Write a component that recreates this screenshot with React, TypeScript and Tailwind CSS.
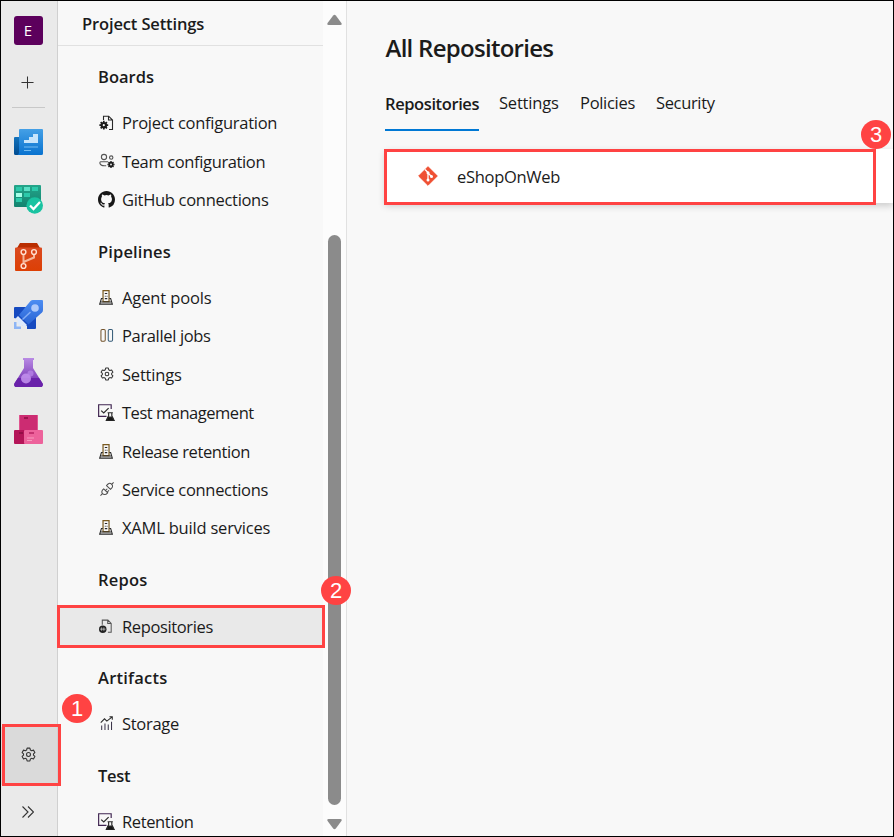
import type { ReactNode } from "react";

type IconName = "projectConfig" | "teamConfig" | "github" | "server" | "parallel" | "gear" | "test" | "plug" | "repo" | "chart";

function GearIcon({ className }: { className: string }) {
  return (
    <svg viewBox="0 0 16 16" className={className} fill="none" stroke="currentColor" strokeWidth="1.15" strokeLinejoin="round">
      <path d="M6.5 1.2h3l.5 2 1.3.75 2-.6 1.5 2.6L13.3 7.4v1.3l1.5 1.4-1.5 2.6-2-.6-1.3.75-.5 2h-3l-.5-2-1.3-.75-2 .6-1.5-2.6 1.5-1.4V7.4L1.2 5.95l1.5-2.6 2 .6L6 3.2z" />
      <circle cx="8" cy="8" r="2.1" />
    </svg>
  );
}

function SolidGear({ x, y, r }: { x: number; y: number; r: number }) {
  return (
    <g stroke="#1b1b1b">
      <circle cx={x} cy={y} r={r * 0.55} fill="none" strokeWidth={r * 0.55} />
      <path
        strokeWidth={r * 0.42}
        d={[0, 45, 90, 135, 180, 225, 270, 315]
          .map((a) => {
            const c = Math.cos((a * Math.PI) / 180);
            const s = Math.sin((a * Math.PI) / 180);
            return `M${x + c * r * 0.7} ${y + s * r * 0.7}L${x + c * r * 1.1} ${y + s * r * 1.1}`;
          })
          .join("")}
      />
    </g>
  );
}

const iconArt: Record<IconName, ReactNode> = {
  projectConfig: (
    <>
      <path d="M4.500 5V1.200h5.200L13.500 5v9.500H10M9.500 1.200V5h4" />
      <SolidGear x={4.8} y={10.2} r={4} />
    </>
  ),
  teamConfig: (
    <g stroke="#555">
      <circle cx="5" cy="4" r="2.600" />
      <circle cx="12.200" cy="4.600" r="1.700" />
      <path d="M9 8.800H1.800C.2 8.800.3 12.800 5.200 12.800h2" />
      <SolidGear x={12} y={11.5} r={3.2} />
    </g>
  ),
  github: (
    <path
      fill="#181818"
      stroke="none"
      d="M8 0C3.58 0 0 3.58 0 8c0 3.54 2.29 6.53 5.47 7.59.4.07.55-.17.55-.38v-1.49c-2.01.37-2.53-.49-2.69-.94-.09-.23-.48-.94-.82-1.13-.28-.15-.68-.52-.01-.53.63-.01 1.08.58 1.23.82.72 1.21 1.87.87 2.33.66.07-.52.28-.87.51-1.07-1.78-.2-3.64-.89-3.64-3.95 0-.87.31-1.59.82-2.15-.08-.2-.36-1.02.08-2.12 0 0 .67-.21 2.2.82a7.42 7.42 0 0 1 4 0c1.53-1.04 2.2-.82 2.2-.82.44 1.1.16 1.92.08 2.12.51.56.82 1.27.82 2.15 0 3.07-1.87 3.75-3.65 3.95.29.25.54.73.54 1.48v2.2c0 .21.15.46.55.38A8.01 8.01 0 0 0 16 8c0-4.42-3.58-8-8-8Z"
    />
  ),
  server: (
    <>
      <path d="M4.300 12.500V.6h6.400v11.900z" stroke="#7a5a20" strokeWidth="1.300" />
      <path d="M4 9H2.600L.8 15h13.400L12.400 9H11M2.200 12.800h10.600" strokeWidth="1.200" />
      <path d="M6.200 3.800h2.600M6.200 6.600h.9M8.100 6.600h.9M6.200 9.200h2.600" />
    </>
  ),
  parallel: (
    <>
      <rect x="1" y="1.500" width="4.600" height="12.600" rx="1.300" stroke="#73542d" />
      <rect x="8.800" y="1.500" width="4.600" height="12.600" rx="1.300" stroke="#355b78" />
    </>
  ),
  gear: <GearIcon className="size-full text-[#333]" />,
  test: (
    <>
      <path d="M8 11.7H.6V.7h11.8v4" stroke="#3f2450" />
      <path d="M3 6.2 5.4 8.5 10 3.8" />
      <path d="M9 8.200h5M10 8.200v3L7.800 15.600h7.400L13 11.200v-3" />
      <path d="M9.400 12.300 8 15.800h7l-1.500-3.500z" fill="#171717" />
    </>
  ),
  plug: (
    <g stroke="#4d4d4d">
      <path d="m.5 14.500 2.100-2.100M12.500 2.500l2-2" />
      <path d="M2.600 12.400c-1.500-2-.5-3.500 1.400-5l4.200 4.200c-1.800 1.900-3.600 2.600-5.600.8ZM7 3.800C8.500 1.600 10.500.4 12.500 2.500c1.800 1.800.8 3.700-1.300 5.400zM6 9l1.800-1.800M8 10.500l1.600-1.700" />
    </g>
  ),
  repo: (
    <>
      <path d="M3.500 6V1.200h6L13 4.700v9.500H9.500M9.300 1.200v3.500H13" stroke="#555" />
      <circle cx="4" cy="10.800" r="4" fill="#222" stroke="none" />
      <path d="M2.800 9v3.600M5.200 9v3.600M1 10.800h6" stroke="#ddd" strokeWidth=".7" />
    </>
  ),
  chart: (
    <>
      <path d="m.8 7 4-4 2.500 2.500L13 .9M10.100.9h3v3" />
      <path d="M1.800 10v5M5.300 8v7M8.800 9v6M12.300 6v9" stroke="#3b3449" />
    </>
  ),
};

const iconBox: Record<IconName, string> = {
  projectConfig: "ml-px size-[16px]",
  teamConfig: "ml-px size-[16px]",
  github: "size-[17px]",
  server: "ml-px size-[15px]",
  parallel: "ml-[1.500px] size-[15px]",
  gear: "ml-[1.500px] size-[14px]",
  test: "size-[17px]",
  plug: "ml-[1.500px] size-[15px]",
  repo: "ml-px size-[15px]",
  chart: "ml-0.5 size-[15px]",
};

function ItemIcon({ name }: { name: IconName }) {
  return (
    <svg viewBox="0 0 16 16" className={`shrink-0 ${iconBox[name]}`} fill="none" stroke="#292929" strokeWidth="1.1">
      {iconArt[name]}
    </svg>
  );
}

type Item = { label: string; icon: IconName; tracking: string; selected?: boolean };
type Group = { title: string; titleStyle: string; items: Item[] };

const groups: Group[] = [
  {
    title: "Boards",
    titleStyle: "h-[58.9px] tracking-[0px]",
    items: [
      { label: "Project configuration", icon: "projectConfig", tracking: "tracking-[-0.27px]" },
      { label: "Team configuration", icon: "teamConfig", tracking: "tracking-[-0.37px]" },
      { label: "GitHub connections", icon: "github", tracking: "tracking-[-0.3px]" },
    ],
  },
  {
    title: "Pipelines",
    titleStyle: "h-[59.7px] tracking-[0.12px]",
    items: [
      { label: "Agent pools", icon: "server", tracking: "tracking-[-0.12px]" },
      { label: "Parallel jobs", icon: "parallel", tracking: "tracking-[-0.35px]" },
      { label: "Settings", icon: "gear", tracking: "tracking-[-0.2px]" },
      { label: "Test management", icon: "test", tracking: "tracking-[-0.48px]" },
      { label: "Release retention", icon: "server", tracking: "tracking-[-0.4px]" },
      { label: "Service connections", icon: "plug", tracking: "tracking-[-0.32px]" },
      { label: "XAML build services", icon: "server", tracking: "tracking-[-0.2px]" },
    ],
  },
  { title: "Repos", titleStyle: "h-[59.9px] tracking-[0.2px]", items: [{ label: "Repositories", icon: "repo", tracking: "tracking-[-0.37px]", selected: true }] },
  { title: "Artifacts", titleStyle: "h-[59.4px] tracking-[0.22px]", items: [{ label: "Storage", icon: "chart", tracking: "tracking-[-0.3px]" }] },
  { title: "Test", titleStyle: "h-[59.2px] tracking-[-0.3px]", items: [{ label: "Retention", icon: "test", tracking: "tracking-[-0.37px]" }] },
];

function ServiceIcon({ children }: { children: ReactNode }) {
  return (
    <div className="flex h-[57.6px] shrink-0 items-center justify-center">
      <svg viewBox="0 0 29 29" className="size-[29px]">
        {children}
      </svg>
    </div>
  );
}

function Rail() {
  return (
    <nav className="flex w-[57px] shrink-0 flex-col border-r border-[#d0d0d0] bg-[#eaeaea]">
      <div className="flex h-[59px] shrink-0 items-center justify-center pr-0.5">
        <div className="flex size-[29px] items-center justify-center rounded-[3px] bg-[#5c005c] text-[15px] text-white">E</div>
      </div>
      <div className="flex h-[47px] shrink-0 items-center justify-center pr-1 pb-[3px]">
        <svg viewBox="0 0 14 14" className="size-[13px]" stroke="#333" strokeWidth="1.1">
          <path d="M7 .5v13M.5 7h13" />
        </svg>
      </div>
      <div className="mr-3 ml-[11px] h-px shrink-0 bg-[#c8c8c8]" />
      <div className="flex flex-col pt-[5px] pr-0.5">
        <ServiceIcon>
          <defs>
            <linearGradient id="overview" x1="0" y1="0" x2="0" y2="1"><stop stopColor="#45a0e6" /><stop offset="1" stopColor="#0872cf" /></linearGradient>
            <linearGradient id="overviewBack" x1="0" y1="0" x2="0" y2="1"><stop stopColor="#1473bc" /><stop offset="1" stopColor="#004c91" /></linearGradient>
          </defs>
          <path d="M1 10h7v18H1.500A1.500 1.500 0 0 1 0 26.500V11a1 1 0 0 1 1-1z" fill="url(#overviewBack)" />
          <path d="M6 2h22a1 1 0 0 1 1 1v23.500a1.500 1.500 0 0 1-1.500 1.500H3.500C5 27 5 26 5 24V3a1 1 0 0 1 1-1z" fill="url(#overview)" />
          <path d="M10 16v-3h5v-3h4V7h5v9z" fill="#c8e5fb" />
          <path d="M10 20h14M10 23.500h7" stroke="#72bcf2" strokeWidth="1.200" />
        </ServiceIcon>
        <ServiceIcon>
          <defs><linearGradient id="boards" x1="0" y1="0" x2="0" y2="1"><stop stopColor="#24a58a" /><stop offset="1" stopColor="#13836f" /></linearGradient></defs>
          <rect width="27" height="22" rx="1" fill="url(#boards)" />
          <path d="M2 2h6v4H2zM2 13h6v4H2zM18 2h6v4h-6zM10 8h6v4h-6z" fill="#2cc9aa" />
          <path d="M10 2h6v4h-6z" fill="#5be0c6" /><path d="M2 8h6v4H2z" fill="#a5ffe8" />
          <circle cx="20.700" cy="20.500" r="8.300" fill="#1ac3a1" />
          <path d="m16 20.500 3.500 3.500 6.500-7" fill="none" stroke="white" strokeWidth="2.300" />
        </ServiceIcon>
        <ServiceIcon>
          <defs><linearGradient id="repos" x1="0" y1="0" x2="0" y2="1"><stop stopColor="#da4a20" /><stop offset="1" stopColor="#dd3f04" /></linearGradient></defs>
          <path d="M6 1h17L26 6H3z" fill="#b92d00" />
          <path d="M2 5.500h25a1 1 0 0 1 1 1V28a1 1 0 0 1-1 1H2a1 1 0 0 1-1-1V6.500a1 1 0 0 1 1-1z" fill="url(#repos)" />
          <path d="M9.500 12v9M20 12.500v3L9.500 20" fill="none" stroke="#f5b69b" strokeWidth="2" />
          <g fill="#d74115" stroke="#ffe0d1" strokeWidth="1.400"><circle cx="9.500" cy="10" r="2.400" /><circle cx="20" cy="10" r="2.400" /><circle cx="9.500" cy="24" r="2.400" /></g>
        </ServiceIcon>
        <ServiceIcon>
          <defs><linearGradient id="pipeline" x1="0" y1="0" x2="0" y2="1"><stop stopColor="#4d8df2" /><stop offset="1" stopColor="#2863d4" /></linearGradient></defs>
          <path d="M1 7h12l9 10v11a1 1 0 0 1-1 1h-8v-3l-5-1v-5l-8-2V8a1 1 0 0 1 1-1z" fill="#164ac0" />
          <path d="M16.500 1Q17.500 0 19 0h9a1 1 0 0 1 1 1v9q0 1.500-1 2.500L14.500 24.500 5 15z" fill="url(#pipeline)" />
          <circle cx="21" cy="8" r="3.800" fill="#afc9fa" />
          <path d="m8.500 19.500 8-7.500" stroke="#83adf5" strokeWidth="1.500" />
          <path d="m4 16 9 9-2.500 2.500L8 25l-2 1-3-3 1-2-2.500-2.500z" fill="#dce9fc" />
          <path d="M0 22h2.500v4.500H7V29H0z" fill="#8db5f5" />
        </ServiceIcon>
        <ServiceIcon>
          <defs><linearGradient id="plans" x1="0" y1="0" x2="0" y2="1"><stop stopColor="#b98be4" /><stop offset="1" stopColor="#6c26ac" /></linearGradient></defs>
          <path d="M9 0h11v2h-1v8l9.300 15c1.300 2 0 4-2 4H2.700c-2 0-3.300-2-2-4L10 10V2H9z" fill="url(#plans)" />
          <path d="M4 20h21l3.300 5c1.300 2 0 4-2 4H2.700c-2 0-3.300-2-2-4z" fill="#6a22aa" />
          <circle cx="12" cy="20.500" r="5" fill="#c493ef" fillOpacity=".85" /><circle cx="16.500" cy="15.500" r="3" fill="#ba86e8" fillOpacity=".75" />
        </ServiceIcon>
        <ServiceIcon>
          <rect x="5" width="19" height="15" rx="1" fill="#cc2c72" />
          <path d="M5 0h1v15H5zM23 0h1v15h-1z" fill="#e05590" />
          <rect y="15" width="15" height="14" rx="1" fill="#b41558" />
          <rect x="10" y="15" width="19" height="14" rx="1" fill="#ed629b" />
          <path d="M10 3h4M5 18h4" stroke="#8b0b42" strokeWidth="1.500" />
          <path d="M15 18h5" stroke="#bf2a6a" strokeWidth="1.700" />
          <path d="M13 23h7M13 25.500h5" stroke="#f89abe" />
        </ServiceIcon>
      </div>
      <div className="mt-auto flex h-[58px] shrink-0 items-center justify-center bg-[#dadada] pr-0.5 pb-1">
        <GearIcon className="size-[15px] text-[#333]" />
      </div>
      <div className="flex h-[51px] shrink-0 items-center justify-center pt-0.5 pr-0.5">
        <svg viewBox="0 0 12 12" className="size-[12px]" fill="none" stroke="#333" strokeWidth="1.100"><path d="m.5.5 5.500 5.500-5.500 5.500M6 .5 11.500 6 6 11.500" /></svg>
      </div>
    </nav>
  );
}

function SettingsMenu() {
  return (
    <aside className="flex w-[265px] shrink-0 flex-col overflow-hidden">
      <h2 className="h-[45px] shrink-0 border-b border-[#e1e1e1] pl-6 text-[16.5px] leading-[45px] font-semibold tracking-[-0.13px]">Project Settings</h2>
      {groups.map((group) => (
        <section key={group.title} className="shrink-0">
          <h3 className={`flex items-center pt-[4px] pl-10 text-[16.5px] font-semibold ${group.titleStyle}`}>{group.title}</h3>
          {group.items.map((item) => (
            <a key={item.label} className={`flex h-[38.4px] items-center pl-10 ${item.selected ? "bg-[#e9e9e9]" : ""}`}>
              <span className="flex w-6 shrink-0 items-center pb-[3px]"><ItemIcon name={item.icon} /></span>
              <span className={`pb-px whitespace-nowrap ${item.tracking}`}>{item.label}</span>
            </a>
          ))}
        </section>
      ))}
    </aside>
  );
}

function Scrollbar() {
  return (
    <div className="flex w-6 shrink-0 flex-col items-center border-r border-[#e1e1e1] bg-[#fcfcfc] pt-[13px]">
      <svg viewBox="0 0 15 12" className="h-3 w-[15px]" fill="#8b8b8b"><path d="M6.200 1.500q1.300-1.500 2.600 0l5.600 7.500q1 2-1 2H1.600q-2 0-1-2z" /></svg>
      <div className="mt-[209px] h-[570px] w-[13px] rounded-full bg-[#8b8b8b]" />
      <svg viewBox="0 0 15 12" className="mt-[13px] h-3 w-[15px]" fill="#8b8b8b"><path d="M6.200 10.500q1.300 1.500 2.600 0l5.600-7.500q1-2-1-2H1.600q-2 0-1 2z" /></svg>
    </div>
  );
}

function RepositoriesPage() {
  return (
    <main className="flex min-w-0 flex-1 flex-col overflow-hidden pl-[38px]">
      <h1 className="mt-[31px] h-8 pl-[0.5px] text-[24px] leading-8 font-semibold tracking-[-0.72px] whitespace-nowrap">All Repositories</h1>
      <div className="mt-[11px] flex h-14 shrink-0 text-[16.5px] leading-[56px]">
        <span className="mr-5 w-[94px] border-b-2 border-[#0078d4] leading-[58px] font-semibold tracking-[-0.4px]">Repositories</span>
        <span className="mr-5 w-[61px] tracking-[-0.2px]">Settings</span>
        <span className="mr-5 w-[56px] tracking-[-0.3px]">Policies</span>
        <span className="tracking-[-0.35px]">Security</span>
      </div>
      <div className="mt-[18px] flex h-[54px] shrink-0 items-center bg-white pl-[33px] shadow-[0_3px_7px_rgba(0,0,0,0.18)]">
        <svg viewBox="0 0 20 20" className="size-5">
          <path d="M10 .7 19.300 10 10 19.300.7 10z" fill="#ef5033" stroke="#ef5033" strokeLinejoin="round" />
          <path d="m7 3.500 3 3v8M10 7l3.500 3.500" fill="none" stroke="#fff" strokeWidth="1.300" />
          <g fill="white"><circle cx="10" cy="6.700" r="1.500" /><circle cx="10" cy="14" r="1.500" /><circle cx="13.500" cy="10.400" r="1.500" /></g>
        </svg>
        <span className="ml-[19px] pt-0.5 tracking-[-0.3px]">eShopOnWeb</span>
      </div>
    </main>
  );
}

function Badge({ value, className }: { value: number; className: string }) {
  return <div className={`absolute flex h-[29px] w-[30px] items-center justify-center rounded-[50%] bg-[#ff4343] font-['Liberation_Sans',sans-serif] text-[22px] leading-none text-white ${className}`}>{value}</div>;
}

export default function App() {
  return (
    <div className="relative flex h-[837px] w-[894px] overflow-hidden border border-black bg-[#f8f8f8] font-['Open_Sans',sans-serif] text-[16.5px] text-[#1b1b1b]">
      <Rail />
      <SettingsMenu />
      <Scrollbar />
      <RepositoriesPage />
      <div className="absolute top-[723px] left-px h-[62px] w-[59px] border-3 border-[#ff4343]" />
      <div className="absolute top-[604px] left-[56px] h-[43px] w-[268px] border-3 border-[#ff4343]" />
      <div className="absolute top-[148px] left-[383px] h-[56px] w-[492px] border-3 border-[#ff4343]" />
      <Badge value={1} className="top-[693px] left-[61px]" />
      <Badge value={2} className="top-[575px] left-[320px]" />
      <Badge value={3} className="top-[119px] left-[860px]" />
    </div>
  );
}
